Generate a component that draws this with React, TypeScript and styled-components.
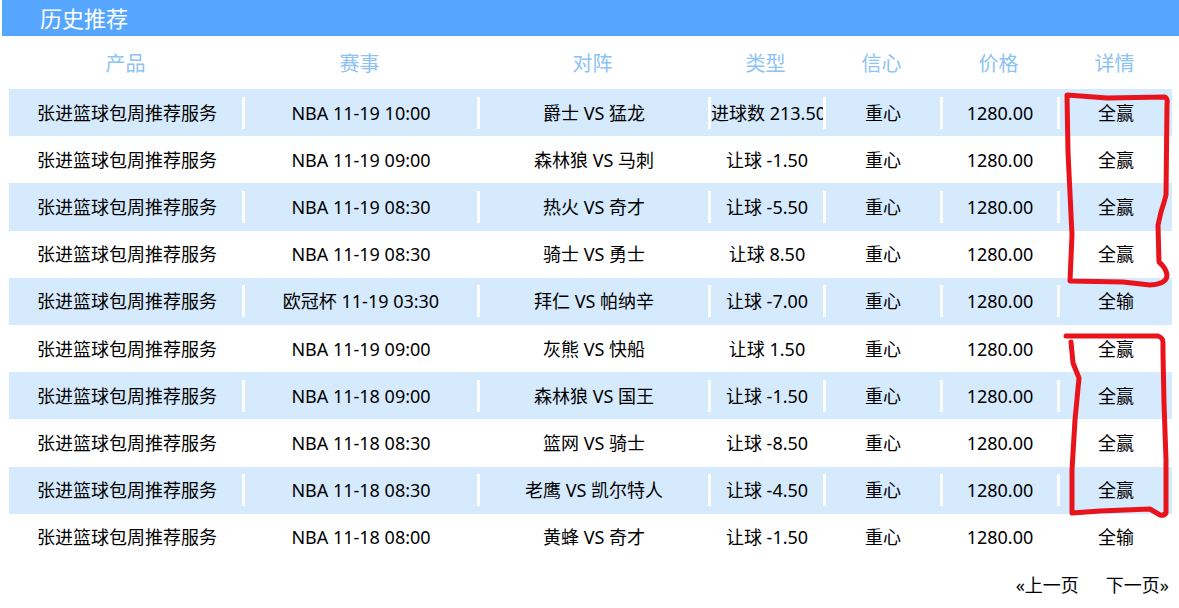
import React from 'react';
import styled, {createGlobalStyle} from 'styled-components';

const GlobalStyle = createGlobalStyle`
  html, body {
    margin: 0;
    padding: 0;
    background: #fff;
  }
  body {
    font-family: 'Noto Sans', 'Noto Sans CJK SC', sans-serif;
    color: #000;
  }
`;

type Row = {
  match: string;
  teams: string;
  kind: string;
  result: string;
};

const rows: Row[] = [
  {match: 'NBA 11-19 10:00', teams: '爵士 VS 猛龙', kind: '进球数 213.50', result: '全赢'},
  {match: 'NBA 11-19 09:00', teams: '森林狼 VS 马刺', kind: '让球 -1.50', result: '全赢'},
  {match: 'NBA 11-19 08:30', teams: '热火 VS 奇才', kind: '让球 -5.50', result: '全赢'},
  {match: 'NBA 11-19 08:30', teams: '骑士 VS 勇士', kind: '让球 8.50', result: '全赢'},
  {match: '欧冠杯 11-19 03:30', teams: '拜仁 VS 帕纳辛', kind: '让球 -7.00', result: '全输'},
  {match: 'NBA 11-19 09:00', teams: '灰熊 VS 快船', kind: '让球 1.50', result: '全赢'},
  {match: 'NBA 11-18 09:00', teams: '森林狼 VS 国王', kind: '让球 -1.50', result: '全赢'},
  {match: 'NBA 11-18 08:30', teams: '篮网 VS 骑士', kind: '让球 -8.50', result: '全赢'},
  {match: 'NBA 11-18 08:30', teams: '老鹰 VS 凯尔特人', kind: '让球 -4.50', result: '全赢'},
  {match: 'NBA 11-18 08:00', teams: '黄蜂 VS 奇才', kind: '让球 -1.50', result: '全输'},
];

const columns = ['产品', '赛事', '对阵', '类型', '信心', '价格', '详情'];
const template = '233px 235px 231px 115px 117px 117px 115px';

const Page = styled.div`
  position: relative;
  width: 1179px;
  height: 608px;
  padding-left: 2px;
  box-sizing: border-box;
  overflow: hidden;
`;

const TitleBar = styled.div`
  height: 36px;
  background: #56a6ff;
  color: #fff;
  font-size: 22px;
  line-height: 36px;
  padding-left: 38px;
`;

const Table = styled.div`
  margin: 0 7px;
  display: flex;
  flex-direction: column;
`;

const HeadRow = styled.div`
  display: grid;
  grid-template-columns: ${template};
  height: 53px;
  align-items: center;
`;

const HeadCell = styled.div`
  text-align: center;
  color: #8dc2f4;
  font-size: 20px;
`;

const BodyRow = styled.div<{$striped: boolean}>`
  display: grid;
  grid-template-columns: ${template};
  height: 47.2px;
  align-items: center;
  background: ${(p) => (p.$striped ? '#d6eafd' : '#fff')};
`;

const Cell = styled.div<{$divider: boolean}>`
  height: 32px;
  line-height: 32px;
  font-size: 18px;
  text-align: center;
  white-space: nowrap;
  overflow: hidden;
  border-left: 3px solid ${(p) => (p.$divider ? '#fff' : 'transparent')};
`;

const Pager = styled.div`
  display: flex;
  justify-content: flex-end;
  gap: 27px;
  padding-right: 10px;
  height: 47px;
  align-items: center;
  font-size: 18px;
`;

const PagerLink = styled.span`
  cursor: pointer;
`;

const Marks = styled.svg`
  position: absolute;
  left: 0;
  top: 0;
  pointer-events: none;
`;

const Annotations = () => (
  <Marks width={1179} height={608} viewBox="0 0 1179 608">
    <g fill="none" stroke="#e8131b" strokeWidth={5} strokeLinejoin="round" strokeLinecap="round">
      <path d="M1067 95 L1107 98 L1165 97 Q1168 99 1167 104 L1166 195 Q1164 203 1161 212 L1158 225 L1159 262 Q1166 268 1167 275 Q1167 284 1150 285 L1123 282 L1070 281 L1072 235 L1068 152 L1067 95 Z" />
      <path d="M1066 336 L1158 336 Q1163 338 1163 342 L1163 353 L1164 403 L1166 460 L1166 513 Q1164 516 1160 515 L1150 509 L1100 511 L1072 513 L1072 470 L1075 420 L1079 378 L1073 363 L1071 342" />
    </g>
  </Marks>
);

export default function App() {
  return (
    <>
      <GlobalStyle />
      <Page>
        <TitleBar>历史推荐</TitleBar>
        <Table>
          <HeadRow>
            {columns.map((c) => (
              <HeadCell key={c}>{c}</HeadCell>
            ))}
          </HeadRow>
          {rows.map((r, i) => {
            const cells = ['张进篮球包周推荐服务', r.match, r.teams, r.kind, '重心', '1280.00', r.result];
            return (
              <BodyRow key={i} $striped={i % 2 === 0}>
                {cells.map((v, j) => (
                  <Cell key={j} $divider={j > 0}>
                    {v}
                  </Cell>
                ))}
              </BodyRow>
            );
          })}
        </Table>
        <Pager>
          <PagerLink>«上一页</PagerLink>
          <PagerLink>下一页»</PagerLink>
        </Pager>
        <Annotations />
      </Page>
    </>
  );
}
